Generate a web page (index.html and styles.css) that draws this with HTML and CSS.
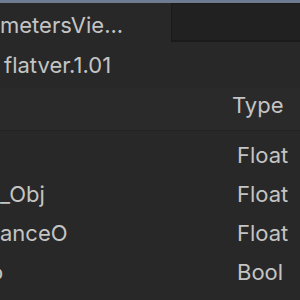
FILE: index.html
```html
<!DOCTYPE html>
<html>
<head>
    <title>Parameters View</title>
    <link rel="stylesheet" href="styles.css">
</head>
<body>
    <div class="window">
        <div class="top-strip"></div>
        <div class="tab-bar">
            <div class="tab">metersVie...</div>
            <div class="tab-filler"></div>
        </div>
        <div class="asset-name">flatver.1.01</div>
        <div class="param-table">
            <div class="row header">
                <span class="name"></span>
                <span class="type">Type</span>
            </div>
            <div class="rows">
                <div class="row">
                    <span class="name"></span>
                    <span class="type">Float</span>
                </div>
                <div class="row">
                    <span class="name">_Obj</span>
                    <span class="type">Float</span>
                </div>
                <div class="row">
                    <span class="name">anceO</span>
                    <span class="type">Float</span>
                </div>
                <div class="row">
                    <span class="name cut">o</span>
                    <span class="type">Bool</span>
                </div>
            </div>
        </div>
    </div>
</body>
</html>
```

FILE: styles.css
```css
body {
    margin: 0;
    padding: 0;
    font-family: Inter, "Noto Sans", sans-serif;
    background-color: #282828;
    color: #c4c4c4;
    overflow: hidden;
}

.window {
    width: 300px;
    height: 300px;
    display: flex;
    flex-direction: column;
    overflow: hidden;
}

.top-strip {
    height: 3px;
    background-color: #6d7c92;
}

.tab-bar {
    display: flex;
    height: 39px;
}

.tab {
    width: 171px;
    background-color: #282828;
    font-size: 22px;
    line-height: 34px;
    padding-top: 5px;
    white-space: nowrap;
    overflow: hidden;
}

.tab-filler {
    flex-grow: 1;
    background-color: #212121;
    border-top: 1px solid #1c1c1c;
    border-left: 1px solid #1a1a1a;
    border-bottom: 2px solid #1a1a1a;
}

.asset-name {
    font-size: 22px;
    line-height: 46px;
    height: 46px;
    padding-left: 4px;
}

.param-table {
    display: flex;
    flex-direction: column;
}

.rows {
    padding-top: 4px;
}

.row {
    display: flex;
    justify-content: space-between;
    align-items: center;
    height: 39px;
    font-size: 22px;
}

.row.header {
    height: 34px;
    line-height: 34px;
    padding-bottom: 8px;
    border-bottom: 1px solid #232323;
    background-color: #2a2a2a;
}

.row .type {
    width: 63px;
}

.header .type {
    width: 68px;
}

.name.cut {
    margin-left: -10px;
}
```
